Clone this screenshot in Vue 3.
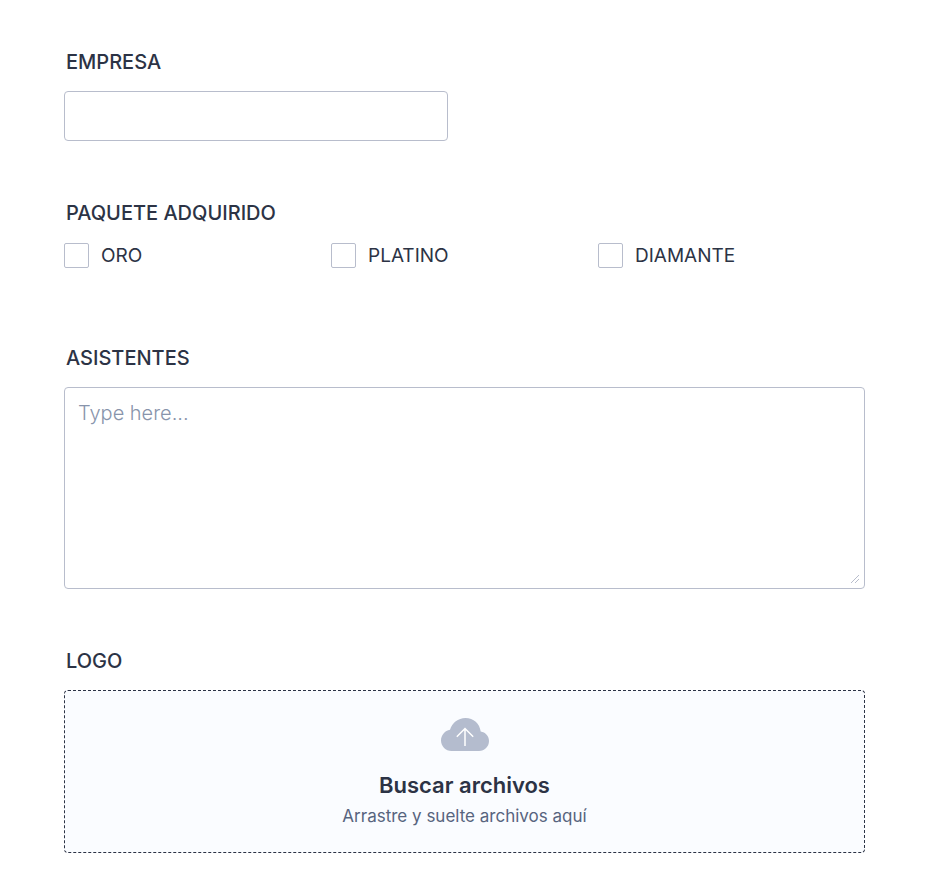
<script setup>
import { ref } from 'vue'

const company = ref('')
const attendees = ref('')
const selected = ref([])
const packages = ['ORO', 'PLATINO', 'DIAMANTE']
</script>

<template>
  <form class="form" @submit.prevent>
    <div class="field">
      <label class="title" for="company">EMPRESA</label>
      <input id="company" v-model="company" class="box text" type="text" />
    </div>

    <fieldset class="field">
      <legend class="title">PAQUETE ADQUIRIDO</legend>
      <div class="options">
        <label v-for="name in packages" :key="name" class="option">
          <input v-model="selected" class="check" type="checkbox" :value="name" />
          <span>{{ name }}</span>
        </label>
      </div>
    </fieldset>

    <div class="field">
      <label class="title" for="attendees">ASISTENTES</label>
      <div class="area-wrap">
        <textarea id="attendees" v-model="attendees" class="box area" placeholder="Type here..."></textarea>
        <svg class="grip" width="10" height="10" viewBox="0 0 10 10" aria-hidden="true">
          <path d="M1 9L9 1M5 9L9 5" />
        </svg>
      </div>
    </div>

    <div class="field">
      <label class="title" for="logo">LOGO</label>
      <label class="drop">
        <input id="logo" class="file" type="file" />
        <svg class="cloud" width="48" height="33" viewBox="0 0 48 33" aria-hidden="true">
          <path
            class="shape"
            d="M10.5 33C4.700 33 0 28.300 0 22.500C0 17 4 12.500 9 11.700C11.200 5 17 0 24.500 0C32.500 0 38.800 5.800 39.700 13.400C44.400 14 48 18 48 23C48 28.500 43.600 33 38 33Z"
          />
          <path class="arrow" d="M24 28V10.500M15.800 18.700L24 10.500L32.200 18.700" />
        </svg>
        <span class="browse">Buscar archivos</span>
        <span class="hint">Arrastre y suelte archivos aquí</span>
      </label>
    </div>
  </form>
</template>

<style>
body {
  margin: 0;
  background: #fff;
}
</style>

<style scoped>
.form {
  display: flex;
  flex-direction: column;
  gap: 60px;
  padding: 50px 65px 30px 64px;
  font-family: Inter, "Liberation Sans", sans-serif;
  color: #2c3345;
}

.form * {
  box-sizing: border-box;
}

.field {
  display: flex;
  flex-direction: column;
  min-width: 0;
  margin: 0;
  padding: 0;
  border: 0;
}

.title {
  margin-bottom: 17px;
  padding: 0 2px;
  font-size: 20px;
  font-weight: 500;
  line-height: 24px;
}

.box {
  width: 100%;
  border: 1px solid #b8bdcc;
  border-radius: 4px;
  background: #fff;
  color: inherit;
  font-family: inherit;
  font-size: 20px;
  outline: none;
}

.text {
  width: 48%;
  height: 50px;
  padding: 0 13px;
}

.options {
  display: grid;
  grid-template-columns: repeat(3, 1fr);
  padding: 1px 0 18px;
}

.option {
  display: flex;
  align-items: center;
  gap: 12px;
  font-size: 19px;
  line-height: 24px;
}

.check {
  appearance: none;
  width: 25px;
  height: 25px;
  margin: 0;
  border: 1px solid #b8bdcc;
  border-radius: 2px;
  background: #fff;
}

.check:checked {
  background: #2c3345;
}

.area-wrap {
  position: relative;
  display: flex;
}

.area {
  height: 202px;
  padding: 13px;
  line-height: 24px;
  resize: none;
}

.area::placeholder {
  color: #8894ab;
  font-weight: 300;
  opacity: 1;
}

.grip {
  position: absolute;
  right: 5px;
  bottom: 5px;
  fill: none;
  stroke: #b8bdcc;
}

.drop {
  position: relative;
  display: flex;
  flex-direction: column;
  align-items: center;
  padding: 27px 16px 24px;
  border: 1px dashed #2c3345;
  border-radius: 4px;
  background: #fafcff;
  cursor: pointer;
}

.file {
  position: absolute;
  inset: 0;
  width: 100%;
  opacity: 0;
}

.shape {
  fill: #b4bcce;
}

.arrow {
  fill: none;
  stroke: #fff;
  stroke-width: 1.5;
}

.browse {
  margin-top: 20px;
  font-size: 22px;
  font-weight: 600;
  line-height: 28px;
}

.hint {
  margin-top: 5px;
  color: #57647e;
  font-size: 17px;
  line-height: 24px;
}
</style>
